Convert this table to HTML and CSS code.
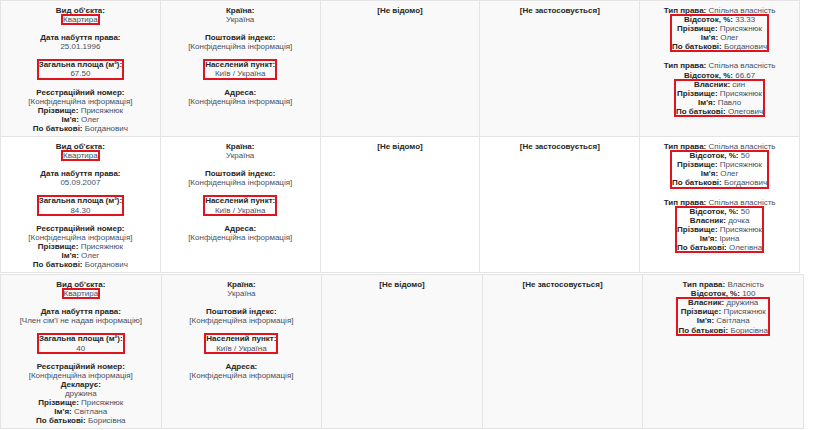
FILE: index.html
```html
<!DOCTYPE html>
<html lang="uk">
<head>
<meta charset="utf-8">
<title>Об'єкти</title>
<link rel="stylesheet" href="styles.css">
</head>
<body>
<table class="tbl tbl1">
  <tr class="odd">
    <td>
      <div class="grp"><div class="lbl">Вид об'єкта:</div><div class="val"><span class="hl">Квартира</span></div></div>
      <div class="grp"><div class="lbl">Дата набуття права:</div><div class="val">25.01.1996</div></div>
      <div class="grp hl"><div class="lbl">Загальна площа (м²):</div><div class="val">67.50</div></div>
      <div class="grp"><div class="lbl">Реєстраційний номер:</div><div class="val">[Конфіденційна інформація]</div>
        <div><span class="lbl">Прізвище:</span> <span class="val">Присяжнюк</span></div>
        <div><span class="lbl">Ім'я:</span> <span class="val">Олег</span></div>
        <div><span class="lbl">По батькові:</span> <span class="val">Богданович</span></div>
      </div>
    </td>
    <td>
      <div class="grp"><div class="lbl">Країна:</div><div class="val">Україна</div></div>
      <div class="grp"><div class="lbl">Поштовий індекс:</div><div class="val">[Конфіденційна інформація]</div></div>
      <div class="grp hl"><div class="lbl">Населений пункт:</div><div class="val">Київ / Україна</div></div>
      <div class="grp"><div class="lbl">Адреса:</div><div class="val">[Конфіденційна інформація]</div></div>
    </td>
    <td><div class="lbl">[Не відомо]</div></td>
    <td><div class="lbl">[Не застосовується]</div></td>
    <td>
      <div class="own">
        <div><span class="lbl">Тип права:</span> <span class="val">Спільна власність</span></div>
        <div class="hl">
          <div><span class="lbl">Відсоток, %:</span> <span class="val">33.33</span></div>
          <div><span class="lbl">Прізвище:</span> <span class="val">Присяжнюк</span></div>
          <div><span class="lbl">Ім'я:</span> <span class="val">Олег</span></div>
          <div><span class="lbl">По батькові:</span> <span class="val">Богданович</span></div>
        </div>
      </div>
      <div class="own">
        <div><span class="lbl">Тип права:</span> <span class="val">Спільна власність</span></div>
        <div><span class="lbl">Відсоток, %:</span> <span class="val">66.67</span></div>
        <div class="hl">
          <div><span class="lbl">Власник:</span> <span class="val">син</span></div>
          <div><span class="lbl">Прізвище:</span> <span class="val">Присяжнюк</span></div>
          <div><span class="lbl">Ім'я:</span> <span class="val">Павло</span></div>
          <div><span class="lbl">По батькові:</span> <span class="val">Олегович</span></div>
        </div>
      </div>
    </td>
  </tr>
  <tr class="even">
    <td>
      <div class="grp"><div class="lbl">Вид об'єкта:</div><div class="val"><span class="hl">Квартира</span></div></div>
      <div class="grp"><div class="lbl">Дата набуття права:</div><div class="val">05.09.2007</div></div>
      <div class="grp hl"><div class="lbl">Загальна площа (м²):</div><div class="val">84.30</div></div>
      <div class="grp"><div class="lbl">Реєстраційний номер:</div><div class="val">[Конфіденційна інформація]</div>
        <div><span class="lbl">Прізвище:</span> <span class="val">Присяжнюк</span></div>
        <div><span class="lbl">Ім'я:</span> <span class="val">Олег</span></div>
        <div><span class="lbl">По батькові:</span> <span class="val">Богданович</span></div>
      </div>
    </td>
    <td>
      <div class="grp"><div class="lbl">Країна:</div><div class="val">Україна</div></div>
      <div class="grp"><div class="lbl">Поштовий індекс:</div><div class="val">[Конфіденційна інформація]</div></div>
      <div class="grp hl"><div class="lbl">Населений пункт:</div><div class="val">Київ / Україна</div></div>
      <div class="grp"><div class="lbl">Адреса:</div><div class="val">[Конфіденційна інформація]</div></div>
    </td>
    <td><div class="lbl">[Не відомо]</div></td>
    <td><div class="lbl">[Не застосовується]</div></td>
    <td>
      <div class="own">
        <div><span class="lbl">Тип права:</span> <span class="val">Спільна власність</span></div>
        <div class="hl">
          <div><span class="lbl">Відсоток, %:</span> <span class="val">50</span></div>
          <div><span class="lbl">Прізвище:</span> <span class="val">Присяжнюк</span></div>
          <div><span class="lbl">Ім'я:</span> <span class="val">Олег</span></div>
          <div><span class="lbl">По батькові:</span> <span class="val">Богданович</span></div>
        </div>
      </div>
      <div class="own">
        <div><span class="lbl">Тип права:</span> <span class="val">Спільна власність</span></div>
        <div class="hl">
          <div><span class="lbl">Відсоток, %:</span> <span class="val">50</span></div>
          <div><span class="lbl">Власник:</span> <span class="val">дочка</span></div>
          <div><span class="lbl">Прізвище:</span> <span class="val">Присяжнюк</span></div>
          <div><span class="lbl">Ім'я:</span> <span class="val">Ірина</span></div>
          <div><span class="lbl">По батькові:</span> <span class="val">Олегівна</span></div>
        </div>
      </div>
    </td>
  </tr>
</table>
<table class="tbl tbl2">
  <tr class="odd">
    <td>
      <div class="grp"><div class="lbl">Вид об'єкта:</div><div class="val"><span class="hl">Квартира</span></div></div>
      <div class="grp"><div class="lbl">Дата набуття права:</div><div class="val">[Член сім'ї не надав інформацію]</div></div>
      <div class="grp hl"><div class="lbl">Загальна площа (м²):</div><div class="val">40</div></div>
      <div class="grp"><div class="lbl">Реєстраційний номер:</div><div class="val">[Конфіденційна інформація]</div>
        <div class="lbl">Декларує:</div>
        <div class="val">дружина</div>
        <div><span class="lbl">Прізвище:</span> <span class="val">Присяжнюк</span></div>
        <div><span class="lbl">Ім'я:</span> <span class="val">Світлана</span></div>
        <div><span class="lbl">По батькові:</span> <span class="val">Борисівна</span></div>
      </div>
    </td>
    <td>
      <div class="grp"><div class="lbl">Країна:</div><div class="val">Україна</div></div>
      <div class="grp"><div class="lbl">Поштовий індекс:</div><div class="val">[Конфіденційна інформація]</div></div>
      <div class="grp hl"><div class="lbl">Населений пункт:</div><div class="val">Київ / Україна</div></div>
      <div class="grp"><div class="lbl">Адреса:</div><div class="val">[Конфіденційна інформація]</div></div>
    </td>
    <td><div class="lbl">[Не відомо]</div></td>
    <td><div class="lbl">[Не застосовується]</div></td>
    <td>
      <div class="own">
        <div><span class="lbl">Тип права:</span> <span class="val">Власність</span></div>
        <div><span class="lbl">Відсоток, %:</span> <span class="val">100</span></div>
        <div class="hl">
          <div><span class="lbl">Власник:</span> <span class="val">дружина</span></div>
          <div><span class="lbl">Прізвище:</span> <span class="val">Присяжнюк</span></div>
          <div><span class="lbl">Ім'я:</span> <span class="val">Світлана</span></div>
          <div><span class="lbl">По батькові:</span> <span class="val">Борисівна</span></div>
        </div>
      </div>
    </td>
  </tr>
</table>
</body>
</html>
```

FILE: styles.css
```css
html, body {
  margin: 0;
  padding: 0;
  background: #ffffff;
}

body {
  font-family: "Liberation Sans", Arial, sans-serif;
  font-size: 8px;
  line-height: 9.1px;
  color: #2a2a2a;
}

.tbl {
  border-collapse: collapse;
  table-layout: fixed;
}

.tbl1 {
  width: 800px;
}

.tbl2 {
  width: 804px;
  margin-top: 1px;
}

.tbl td {
  border: 1px solid #e4e4e4;
  padding: 5px 2px 3px;
  vertical-align: top;
  text-align: center;
}

.tbl tr.odd td {
  background: #f9f9f9;
}

.tbl tr.even td {
  background: #ffffff;
}

.grp {
  margin-bottom: 9px;
}

.grp:last-child {
  margin-bottom: 0;
}

.own {
  margin-bottom: 10px;
}

.own:last-child {
  margin-bottom: 0;
}

.lbl {
  font-weight: bold;
  color: #262626;
}

.val {
  color: #4a5060;
}

.hl {
  outline: 2px solid #e0141e;
  outline-offset: -1px;
}

span.hl {
  display: inline-block;
  padding: 0 1px;
}

div.hl {
  width: fit-content;
  margin-left: auto;
  margin-right: auto;
  padding: 0 1px;
}
```
